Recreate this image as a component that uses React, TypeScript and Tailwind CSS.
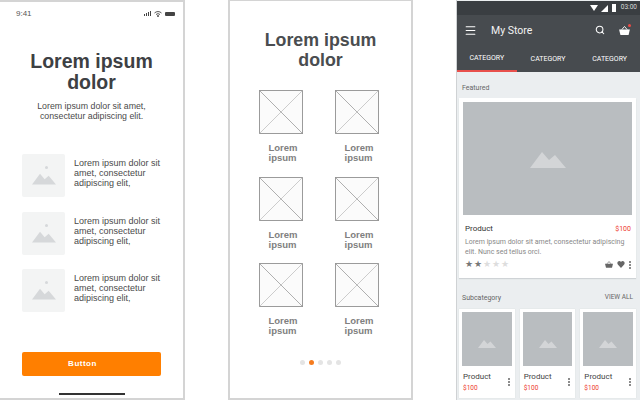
import React from 'react';
import { Menu, Search } from 'lucide-react';

const sans = 'font-["Liberation_Sans",Arial,sans-serif]';
const roboto = 'font-["Roboto",sans-serif]';

const Mountain = ({ className }: { className: string }) => (
    <svg viewBox="0 0 36 18" className={className} fill="currentColor">
        <path d="M0 18 L12 2 L19 10 L25 5 L36 18 Z" />
    </svg>
);

const FeatureRow = () => (
    <div className="flex items-start gap-[9px]">
        <div className="relative w-[43px] h-[43px] shrink-0 rounded-[2px] bg-[#f3f4f4] flex items-end justify-center pb-[11px]">
            <div className="absolute top-[12px] right-[17px] w-[3px] h-[3px] rounded-full bg-[#d6d8da]" />
            <Mountain className="w-[24px] h-[15px] text-[#d6d8da]" />
        </div>
        <p className="mt-[4px] text-[9px] leading-[10px] text-[#4a4a4a] w-[92px]">Lorem ipsum dolor sit amet, consectetur adipiscing elit,</p>
    </div>
);

const Onboarding = () => (
    <div className={`w-[185px] shrink-0 h-[400px] border-r-2 border-y-2 border-[#d4d4d4] flex flex-col bg-white ${sans}`}>
        <div className="flex items-center justify-between pl-[16px] pr-[8px] h-[22px] pt-[1px]">
            <span className="text-[8px] text-[#555]">9:41</span>
            <div className="flex items-center gap-[2px] text-[#444]">
                <svg width="8" height="5" viewBox="0 0 8 5" fill="currentColor">
                    <rect x="0" y="3" width="1" height="2" /><rect x="2" y="2" width="1" height="3" /><rect x="4" y="1" width="1" height="4" /><rect x="6" y="0" width="1" height="5" />
                </svg>
                <svg width="8" height="6" viewBox="0 0 8 6" fill="none" stroke="currentColor" strokeWidth="0.9">
                    <path d="M0.5 2 A5 5 0 0 1 7.5 2 M2 3.5 A3 3 0 0 1 6 3.5" />
                    <circle cx="4" cy="5" r="0.6" fill="currentColor" />
                </svg>
                <div className="w-[10px] h-[4px] ml-[1px] bg-[#444] rounded-[1px]" />
            </div>
        </div>
        <h1 className="mt-[27px] text-[19.5px] leading-[21px] font-bold text-[#3d4043] text-center">Lorem ipsum<br />dolor</h1>
        <p className="mt-[9px] text-[8.8px] leading-[9.5px] text-[#4a4a4a] text-center">Lorem ipsum dolor sit amet,<br />consectetur adipiscing elit.</p>
        <div className="mt-[33px] pl-[22px] flex flex-col gap-[14.5px]">
            <FeatureRow />
            <FeatureRow />
            <FeatureRow />
        </div>
        <button className="mt-[40px] ml-[22px] w-[139px] h-[24px] shrink-0 rounded-[2px] bg-[#ff7f00] text-white text-[8px] font-bold tracking-[0.5px] pr-[18px]">Button</button>
        <div className="mt-[17px] mx-auto w-[66px] h-[2px] bg-[#333]" />
    </div>
);

const CrossTile = () => (
    <div className="flex flex-col w-[44px]">
        <svg width="44" height="44" viewBox="0 0 44 44" fill="none">
            <rect x="0.5" y="0.5" width="43" height="43" fill="#fbfbfb" stroke="#9b9b9b" />
            <path d="M0.5 0.5 L43.5 43.5" stroke="#8e8e8e" strokeWidth="0.7" />
            <path d="M43.5 0.5 L0.5 43.5" stroke="#b8b8b8" strokeWidth="0.7" />
        </svg>
        <p className="mt-[9px] text-[9.5px] leading-[10px] font-bold text-[#808080] pl-[10px] whitespace-nowrap">Lorem<br />ipsum</p>
    </div>
);

const Grid = () => (
    <div className={`w-[185px] shrink-0 h-[400px] border-2 border-[#d4d4d4] border-t-[1px] flex flex-col items-center bg-white ${sans}`}>
        <h1 className="mt-[29px] text-[17.8px] leading-[20px] font-bold text-[#4a4d50] text-center">Lorem ipsum<br />dolor</h1>
        <div className="mt-[20px] mr-[4px] grid grid-cols-[44px_44px] gap-x-[32px] gap-y-[13.5px]">
            <CrossTile />
            <CrossTile />
            <CrossTile />
            <CrossTile />
            <CrossTile />
            <CrossTile />
        </div>
        <div className="mt-[24px] flex gap-[4px]">
            <div className="w-[5px] h-[5px] rounded-full bg-[#e4e4e4]" />
            <div className="w-[5px] h-[5px] rounded-full bg-[#f57c1f]" />
            <div className="w-[5px] h-[5px] rounded-full bg-[#e4e4e4]" />
            <div className="w-[5px] h-[5px] rounded-full bg-[#e4e4e4]" />
            <div className="w-[5px] h-[5px] rounded-full bg-[#e4e4e4]" />
        </div>
    </div>
);

const Dots = () => (
    <div className="flex flex-col gap-[1px] w-[2px]">
        <div className="w-[2px] h-[2px] rounded-full bg-[#666]" />
        <div className="w-[2px] h-[2px] rounded-full bg-[#666]" />
        <div className="w-[2px] h-[2px] rounded-full bg-[#666]" />
    </div>
);

const Basket = ({ className }: { className: string }) => (
    <svg viewBox="0 0 12 10" className={className} fill="currentColor">
        <path d="M0 4 H12 L10.5 10 H1.5 Z" />
        <path d="M3 4 L6 0.5 L9 4" fill="none" stroke="currentColor" strokeWidth="1" />
    </svg>
);

const SmallProduct = () => (
    <div className="flex-1 bg-white p-[3px] pb-0 shadow-[0_0_1px_#cfd3d6]">
        <div className="h-[54px] bg-[#b9bdc0] flex items-center justify-center">
            <Mountain className="w-[18px] h-[9px] text-[#d3d5d7] mt-[8px]" />
        </div>
        <div className="flex items-center justify-between pl-[1px] pr-[2px] pt-[2px] h-[30px]">
            <div>
                <p className="text-[8px] leading-[10px] text-[#444]">Product</p>
                <p className="text-[6.5px] leading-[10px] mt-[1px] text-[#ee3a2e]">$100</p>
            </div>
            <Dots />
        </div>
    </div>
);

const Store = () => (
    <div className={`w-[184px] shrink-0 h-[400px] flex flex-col bg-[#ebeef0] border-l border-[#cfd2d4] ${roboto}`}>
        <div className="h-[14px] mt-[1px] bg-[#3a3e42] flex items-center justify-end gap-[3px] pr-[3px]">
            <svg width="8" height="6" viewBox="0 0 8 6" fill="#fff"><path d="M0 0 H8 L4 6 Z" /></svg>
            <svg width="7" height="7" viewBox="0 0 7 7" fill="#fff"><path d="M0 7 L7 0 V7 Z" /></svg>
            <div className="w-[4px] h-[8px] bg-white ml-[1px] mr-[2px]" />
            <span className="text-[6.5px] text-[#d8d8d8]">03:00</span>
        </div>
        <div className="h-[57px] bg-[#474b4f] flex flex-col">
            <div className="h-[30px] flex items-center pl-[7px] pr-[10px] text-white">
                <Menu size={13} strokeWidth={2} />
                <span className="ml-[14px] text-[10.5px] mt-[2px] text-[#f2f2f2]">My Store</span>
                <Search size={10} strokeWidth={2.5} className="ml-auto mr-[14px]" />
                <div className="relative">
                    <Basket className="w-[11px] h-[9px] text-white" />
                    <div className="absolute -top-[2px] -right-[1px] w-[3px] h-[3px] rounded-full bg-[#ef4a45]" />
                </div>
            </div>
            <div className="flex h-[27px] text-[7px] text-white">
                <div className="w-[60px] flex items-center justify-center pt-[1px] border-b-2 border-[#e8504c]">CATEGORY</div>
                <div className="w-[63px] flex items-center justify-center pt-[1px]">CATEGORY</div>
                <div className="w-[61px] flex items-center justify-center pt-[1px]">CATEGORY</div>
            </div>
        </div>
        <div className="h-[26px] pl-[5px] flex items-center text-[7px] text-[#666] pt-[6px]">Featured</div>
        <div className="ml-[2px] mr-[4px] h-[180px] bg-white p-[4px] shadow-[0_1px_1px_#cfd3d6]">
            <div className="h-[113px] bg-[#b9bdc0] flex items-center justify-center">
                <Mountain className="w-[36px] h-[18px] text-[#d3d5d7]" />
            </div>
            <div className="flex justify-between items-center pl-[2px] pr-[1px] mt-[9px] h-[10px]">
                <span className="text-[8px] text-[#333]">Product</span>
                <span className="text-[7px] text-[#ee3a2e]">$100</span>
            </div>
            <p className="mt-[3px] pl-[2px] text-[7px] leading-[10px] text-[#888]">Lorem ipsum dolor sit amet, consectetur adipiscing elit. Nunc sed tellus orci.</p>
            <div className="mt-[3px] pl-[2px] pr-[1px] flex items-center justify-between">
                <div className="flex gap-[1px] text-[9px] leading-[9px]">
                    <span className="text-[#777]">★</span>
                    <span className="text-[#777]">★</span>
                    <span className="text-[#ddd]">★</span>
                    <span className="text-[#ddd]">★</span>
                    <span className="text-[#ddd]">★</span>
                </div>
                <div className="flex items-center gap-[4px]">
                    <Basket className="w-[8px] h-[7px] text-[#666]" />
                    <svg width="8" height="7" viewBox="0 0 24 22" fill="#666"><path d="M12 22 L2 11 C-2 5 3 0 7 0 C9 0 11 1 12 3 C13 1 15 0 17 0 C21 0 26 5 22 11 Z" /></svg>
                    <Dots />
                </div>
            </div>
        </div>
        <div className="h-[31px] pl-[5px] pr-[7px] flex items-center justify-between text-[#666] pt-[9px]">
            <span className="text-[7px]">Subcategory</span>
            <span className="text-[6.5px]">VIEW ALL</span>
        </div>
        <div className="ml-[2px] mr-[4px] flex gap-[5px] h-[89px]">
            <SmallProduct />
            <SmallProduct />
            <SmallProduct />
        </div>
    </div>
);

export default function App() {
    return (
        <div className="w-[640px] h-[400px] overflow-hidden bg-white flex gap-[43px]">
            <Onboarding />
            <Grid />
            <Store />
        </div>
    );
}
